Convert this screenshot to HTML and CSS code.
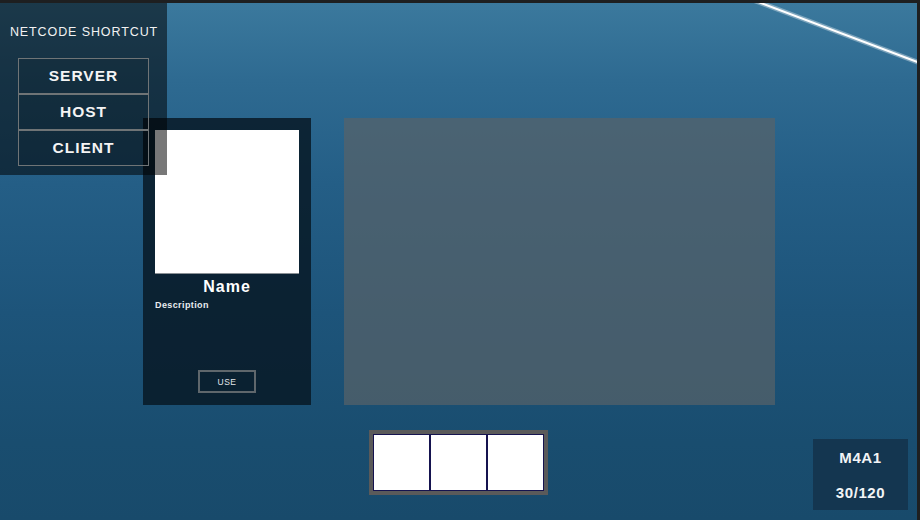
FILE: index.html
```html
<!DOCTYPE html>
<html>
<head>
<meta charset="utf-8">
<link rel="stylesheet" href="styles.css">
</head>
<body>
<div class="screen">
  <svg class="streak" width="920" height="80" viewBox="0 0 920 80">
    <line x1="753" y1="-3" x2="920" y2="60" stroke="rgba(255,255,255,0.35)" stroke-width="5"/>
    <line x1="753" y1="-3" x2="920" y2="60" stroke="#ffffff" stroke-width="2"/>
  </svg>

  <div class="netcode">
    <div class="netcode-title">NETCODE SHORTCUT</div>
    <div class="netcode-buttons">
      <div class="nc-btn">SERVER</div>
      <div class="nc-btn">HOST</div>
      <div class="nc-btn">CLIENT</div>
    </div>
  </div>

  <div class="main">
    <div class="card">
      <div class="card-image"></div>
      <div class="card-name">Name</div>
      <div class="card-desc">Description</div>
      <div class="card-actions"><div class="use-btn">USE</div></div>
    </div>
    <div class="viewer"></div>
  </div>

  <div class="bottom">
    <div class="spacer"></div>
    <div class="hotbar">
      <div class="slot"></div>
      <div class="slot"></div>
      <div class="slot"></div>
    </div>
    <div class="ammo">
      <div class="ammo-name">M4A1</div>
      <div class="ammo-count">30/120</div>
    </div>
  </div>
</div>
</body>
</html>
```

FILE: styles.css
```css
html, body {
  margin: 0;
  padding: 0;
  background: #1e1e1e;
}

.screen {
  position: relative;
  width: 920px;
  height: 520px;
  box-sizing: border-box;
  border-top: 3px solid #1e1f20;
  border-right: 3px solid #1e1f20;
  overflow: hidden;
  font-family: "Liberation Sans", Arial, sans-serif;
  color: #ffffff;
  background: linear-gradient(180deg, #3b799d 0%, #2e6a91 15%, #245e86 35%, #1d547a 60%, #194d6f 85%, #184a6b 100%);
  display: flex;
  flex-direction: column;
}

.streak {
  position: absolute;
  top: 0;
  left: 0;
  pointer-events: none;
}

/* Netcode overlay panel */
.netcode {
  position: absolute;
  top: 0;
  left: 0;
  z-index: 5;
  width: 167px;
  height: 172px;
  box-sizing: border-box;
  padding-top: 22px;
  background: rgba(0, 0, 0, 0.53);
  display: flex;
  flex-direction: column;
  align-items: center;
}

.netcode-title {
  font-size: 12.5px;
  line-height: 14px;
  letter-spacing: 0.9px;
  color: #f2f2f2;
  margin-left: 1px;
}

.netcode-buttons {
  margin-top: 19px;
  display: flex;
  flex-direction: column;
}

.nc-btn {
  width: 131px;
  height: 36px;
  box-sizing: border-box;
  border: 1.5px solid #6f7476;
  display: flex;
  align-items: center;
  justify-content: center;
  font-size: 15.5px;
  font-weight: bold;
  letter-spacing: 1px;
  color: #f4f4f4;
  background: rgba(0, 0, 0, 0.08);
}

/* Main content row */
.main {
  margin-top: 115px;
  padding-left: 143px;
  display: flex;
  gap: 33px;
  height: 287px;
}

.card {
  width: 168px;
  box-sizing: border-box;
  padding: 12px 12px 12px;
  background: rgba(8, 26, 38, 0.86);
  display: flex;
  flex-direction: column;
}

.card-image {
  height: 143px;
  background: #ffffff;
  border-bottom: 1px solid #8a9095;
}

.card-name {
  text-align: center;
  font-size: 16px;
  font-weight: bold;
  letter-spacing: 1px;
  margin-top: 3px;
  line-height: 20px;
}

.card-desc {
  font-size: 9px;
  font-weight: bold;
  letter-spacing: 0.4px;
  margin-top: 3px;
  line-height: 11px;
  color: #e8ecef;
}

.card-actions {
  margin-top: auto;
  display: flex;
  justify-content: center;
}

.use-btn {
  width: 58px;
  height: 23px;
  box-sizing: border-box;
  border: 2px solid #5f676c;
  display: flex;
  align-items: center;
  justify-content: center;
  font-size: 8.5px;
  letter-spacing: 0.5px;
  color: #e2e7eb;
}

.viewer {
  width: 431px;
  background: rgba(88, 98, 104, 0.7);
}

/* Bottom HUD */
.bottom {
  margin-top: 25px;
  display: grid;
  grid-template-columns: 1fr auto 1fr;
  align-items: start;
}

.hotbar {
  display: flex;
  padding: 4px;
  background: #5a5a5a;
}

.slot {
  width: 57px;
  height: 57px;
  box-sizing: border-box;
  background: #ffffff;
  border: 1.5px solid #15134f;
}

.ammo {
  justify-self: end;
  margin-top: 9px;
  margin-right: 9px;
  width: 95px;
  height: 71px;
  background: #143650;
  display: flex;
  flex-direction: column;
  align-items: center;
  justify-content: space-between;
  box-sizing: border-box;
  padding: 10px 0 9px;
  font-size: 15px;
  font-weight: bold;
  letter-spacing: 0.6px;
  color: #f2f4f6;
}

.ammo-name, .ammo-count {
  line-height: 17px;
}
```
